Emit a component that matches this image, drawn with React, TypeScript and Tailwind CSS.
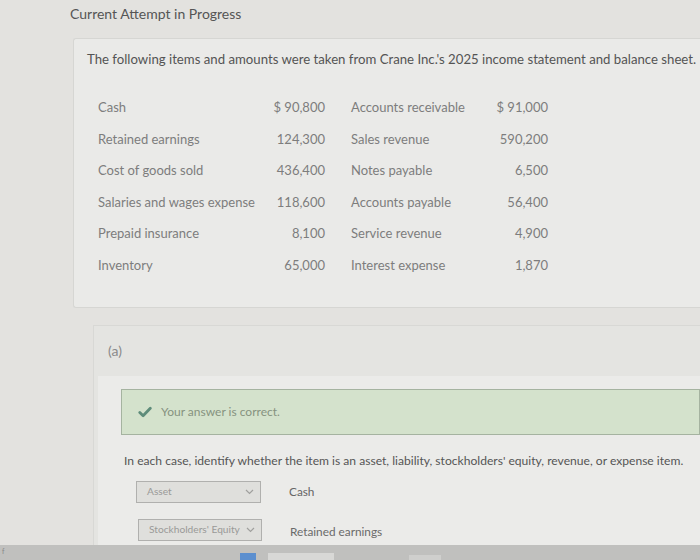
const rows: [string, string, string, string][] = [
  ["Cash", "$ 90,800", "Accounts receivable", "$ 91,000"],
  ["Retained earnings", "124,300", "Sales revenue", "590,200"],
  ["Cost of goods sold", "436,400", "Notes payable", "6,500"],
  ["Salaries and wages expense", "118,600", "Accounts payable", "56,400"],
  ["Prepaid insurance", "8,100", "Service revenue", "4,900"],
  ["Inventory", "65,000", "Interest expense", "1,870"],
]

function Select({ value, width }: { value: string; width: string }) {
  return (
    <div
      className={`flex h-[22px] items-center justify-between border border-[#b0b0ae] bg-[#dfdfdc] pl-[10px] pr-[6px] text-[10.2px] text-[#9a9a98] ${width}`}
    >
      <span>{value}</span>
      <svg width="9" height="6" viewBox="0 0 9 6" fill="none" stroke="#a0a09e" strokeWidth="1.2">
        <path d="M1 1l3.5 3.5L8 1" />
      </svg>
    </div>
  )
}

export default function App() {
  return (
    <div
      className="relative h-[560px] w-[700px] overflow-hidden bg-[#e3e2df] text-[#5b5b5b]"
      style={{ fontFamily: "Lato, 'Open Sans', sans-serif" }}
    >
      <div className="pl-[70px] pt-[5px] text-[14px] leading-[18px] text-[#555]">Current Attempt in Progress</div>

      <section className="ml-[73px] mt-[15px] h-[270px] rounded-l-[3px] border border-r-0 border-[#d6d6d3] bg-[#eaeae8] pl-[13px] pt-[10px]">
        <p className="whitespace-nowrap text-[13.2px] leading-[20px] text-[#545454]">
          The following items and amounts were taken from Crane Inc.'s 2025 income statement and balance sheet.
        </p>
        <div className="mt-[28px] grid grid-cols-[160px_67px_26px_130px_67px] pl-[11px] text-[13px] text-[#7d7d7d]">
          {rows.map((r) => (
            <div key={r[0]} className="contents">
              <div className="h-[31.5px] whitespace-nowrap leading-[20px]">{r[0]}</div>
              <div className="text-right leading-[20px]">{r[1]}</div>
              <div />
              <div className="whitespace-nowrap leading-[20px]">{r[2]}</div>
              <div className="whitespace-nowrap text-right leading-[20px]">{r[3]}</div>
            </div>
          ))}
        </div>
      </section>

      <section className="ml-[93px] mt-[17px] border-l border-t border-[#d8d8d5] bg-[#e4e4e1]">
        <div className="h-[50px] pl-[14px] pt-[16px] text-[14px] leading-[18px] text-[#8a8a8a]">(a)</div>
        <div className="ml-[4px] h-[200px] bg-[#ebebe9] pl-[23px] pt-[13px]">
          <div className="flex h-[46px] items-center border border-[#a5b3a0] bg-[#d4e2cc] pl-[16px]">
            <svg width="14" height="12" viewBox="0 0 14 12" className="mr-[9px]">
              <path d="M1.8 6.5l3.3 3.3L12.3 2.2" fill="none" stroke="#5e8c7a" strokeWidth="2.8" strokeLinecap="round" strokeLinejoin="round" />
            </svg>
            <span className="text-[12px] text-[#86927f]">Your answer is correct.</span>
          </div>
          <p className="ml-[3px] mt-[18px] whitespace-nowrap text-[12.1px] leading-[16px] text-[#555]">
            In each case, identify whether the item is an asset, liability, stockholders' equity, revenue, or expense item.
          </p>
          <div className="ml-[15px] mt-[12px] flex items-center gap-[28px]">
            <Select value="Asset" width="w-[125px]" />
            <span className="text-[11.8px] text-[#666]">Cash</span>
          </div>
          <div className="ml-[17px] mt-[16px] flex items-center gap-[28px]">
            <Select value="Stockholders' Equity" width="w-[124px]" />
            <span className="mt-[3px] text-[11.8px] text-[#6a6a6a]">Retained earnings</span>
          </div>
        </div>
      </section>

      <div className="absolute bottom-0 left-0 flex h-[15px] w-[700px] items-end bg-[#c0c0be]">
        <span className="absolute left-[2px] top-[1px] text-[7px] text-[#888]">f</span>
        <div className="ml-[240px] h-[7px] w-[16px] bg-[#5c8fcf]" />
        <div className="ml-[12px] h-[7px] w-[66px] bg-[#d8d8d6]" />
        <div className="ml-[75px] h-[5px] w-[32px] bg-[#cfcfcd]" />
      </div>
    </div>
  )
}
